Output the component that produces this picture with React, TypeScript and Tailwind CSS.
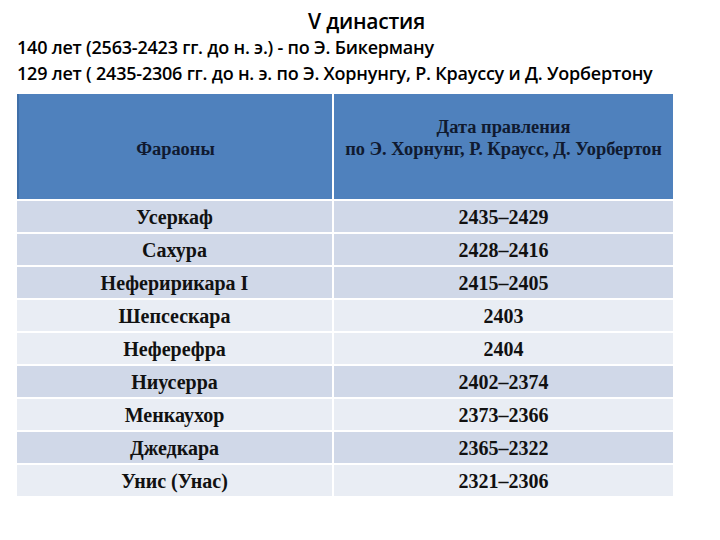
const rows = [
  { name: 'Усеркаф', date: '2435–2429', dark: true },
  { name: 'Сахура', date: '2428–2416', dark: true },
  { name: 'Неферирикара I', date: '2415–2405', dark: true },
  { name: 'Шепсескара', date: '2403', dark: false },
  { name: 'Неферефра', date: '2404', dark: false },
  { name: 'Ниусерра', date: '2402–2374', dark: true },
  { name: 'Менкаухор', date: '2373–2366', dark: false },
  { name: 'Джедкара', date: '2365–2322', dark: true },
  { name: 'Унис (Унас)', date: '2321–2306', dark: false },
];

export default function App() {
  return (
    <div className="w-[720px] h-[540px] bg-white overflow-hidden text-black">
      {/* Heading */}
      <div className="pt-[8px] pl-[17px] font-['Open_Sans',sans-serif]">
        <h1 className="text-center text-[21px] leading-[26px] font-semibold pr-[4px] tracking-[-0.01em]">V династия</h1>
        <p className="text-[18px] leading-[26px] font-semibold tracking-[-0.012em]">140 лет (2563-2423 гг. до н. э.) - по Э. Бикерману</p>
        <p className="text-[18px] leading-[26px] font-semibold tracking-[-0.012em]">129 лет ( 2435-2306 гг. до н. э. по Э. Хорнунгу, Р. Крауссу и Д. Уорбертону</p>
      </div>

      {/* Table */}
      <div className="ml-[17px] mt-[8px] w-[656px] font-['Liberation_Serif',serif] font-bold">
        <div className="grid grid-cols-[315px_1fr] gap-x-[2px] h-[105px] bg-white text-[#101a30] text-[18.4px] leading-[22px]">
          <div className="bg-[#4f81bd] border-l-[2px] border-[#3f6fa8] pt-[44px] text-center">Фараоны</div>
          <div className="bg-[#4f81bd] pt-[22px] text-center">
            <div>Дата правления</div>
            <div>по Э. Хорнунг, Р. Краусс, Д. Уорбертон</div>
          </div>
        </div>
        <div className="flex flex-col gap-[2px] pt-[2px] bg-white text-[20px] text-[#111]">
          {rows.map((r) => (
            <div key={r.name} className="grid grid-cols-[315px_1fr] gap-x-[2px] h-[31px]">
              <div className={`${r.dark ? 'bg-[#d0d8e8]' : 'bg-[#e9edf4]'} flex items-center justify-center`}>{r.name}</div>
              <div className={`${r.dark ? 'bg-[#d0d8e8]' : 'bg-[#e9edf4]'} flex items-center justify-center`}>{r.date}</div>
            </div>
          ))}
        </div>
      </div>
    </div>
  );
}
